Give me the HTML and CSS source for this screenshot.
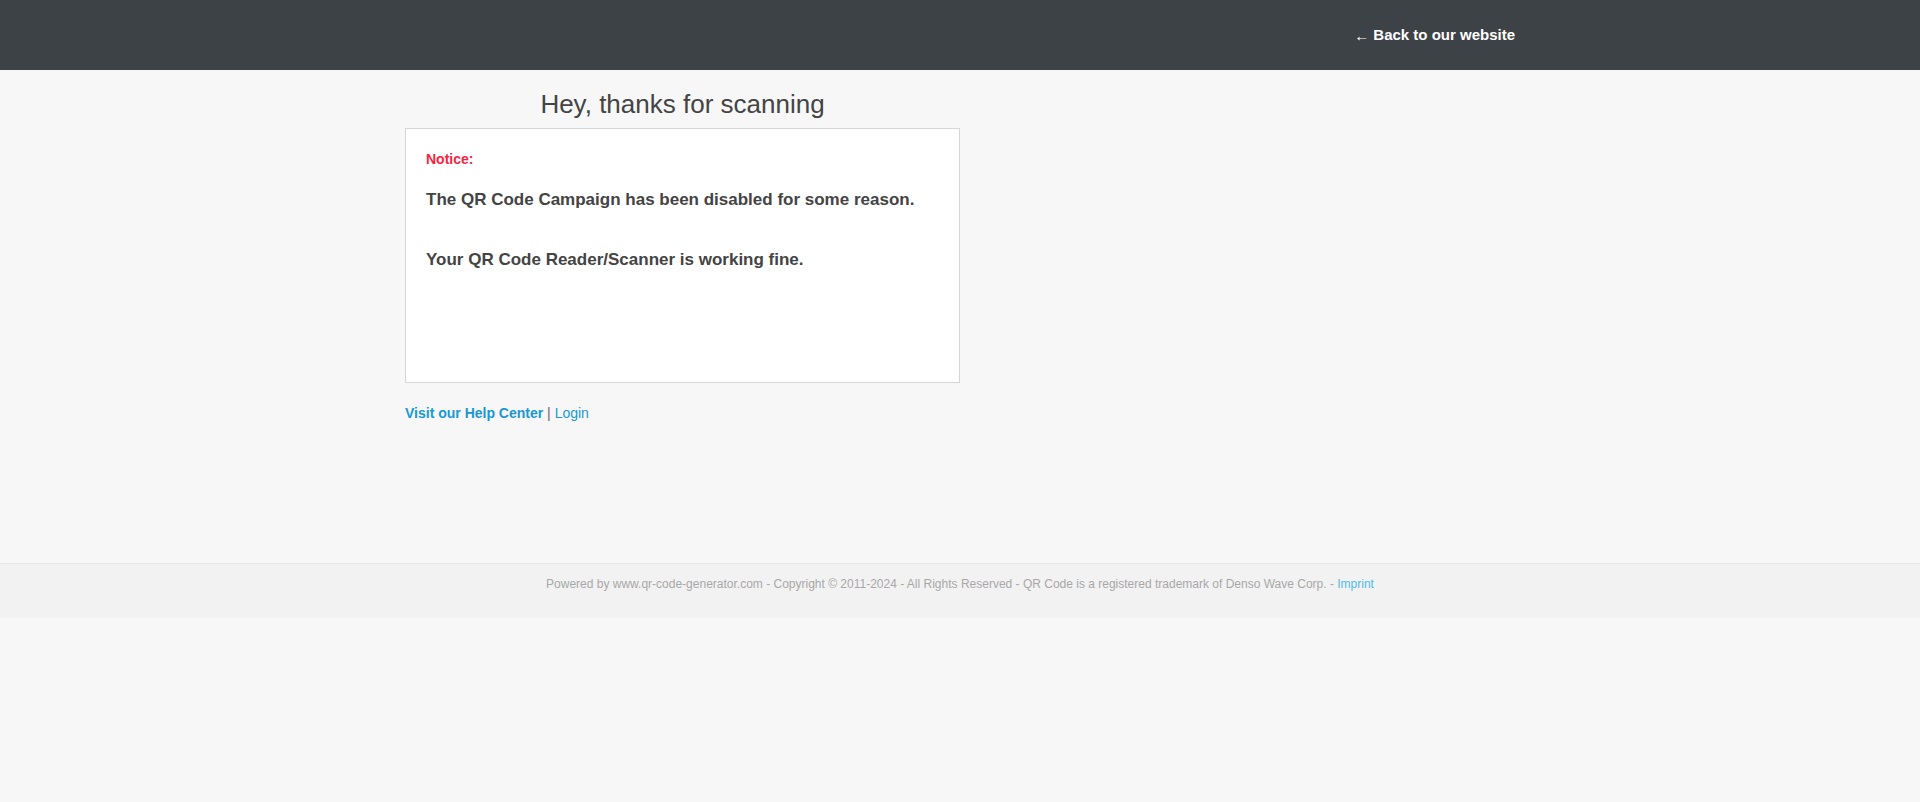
FILE: index.html
```html
<!DOCTYPE html>
<html lang="en">
<head>
<meta charset="utf-8">
<title>Hey, thanks for scanning</title>
<link rel="stylesheet" href="styles.css">
</head>
<body>
<header class="topbar">
  <div class="container topbar-inner">
    <a class="back-link" href="#"><span class="arrow">&larr;</span> Back to our website</a>
  </div>
</header>
<main class="container main">
  <div class="column">
    <h1 class="title">Hey, thanks for scanning</h1>
    <div class="card">
      <p class="notice">Notice:</p>
      <p class="message first">The QR Code Campaign has been disabled for some reason.</p>
      <p class="message">Your QR Code Reader/Scanner is working fine.</p>
    </div>
    <p class="links"><a class="help" href="#">Visit our Help Center</a> <span class="sep">|</span> <a class="login" href="#">Login</a></p>
  </div>
</main>
<footer class="footer">
  <p class="footer-text">Powered by www.qr-code-generator.com - Copyright © 2011-2024 - All Rights Reserved - QR Code is a registered trademark of Denso Wave Corp. - <a class="imprint" href="#">Imprint</a></p>
</footer>
</body>
</html>
```

FILE: styles.css
```css
html, body {
  margin: 0;
  padding: 0;
}
body {
  background: #f7f7f7;
  font-family: "Liberation Sans", Arial, sans-serif;
  color: #444444;
}
a {
  text-decoration: none;
}
.container {
  width: 1110px;
  margin: 0 auto;
}
.topbar {
  background: #3d4246;
  height: 70px;
}
.topbar-inner {
  display: flex;
  justify-content: flex-end;
  align-items: flex-start;
  padding-top: 25px;
  box-sizing: border-box;
}
.back-link {
  color: #ffffff;
  font-weight: bold;
  font-size: 15px;
  line-height: 20px;
}
.back-link .arrow {
  font-weight: normal;
  font-size: 15px;
  vertical-align: -1px;
}
.main {
  padding-top: 19px;
}
.column {
  width: 555px;
}
.title {
  margin: 0 0 9px;
  font-size: 26px;
  line-height: 30px;
  font-weight: normal;
  text-align: center;
  color: #444444;
}
.card {
  background: #ffffff;
  border: 1px solid #d6d6d6;
  box-sizing: border-box;
  min-height: 255px;
  padding: 20px;
}
.notice {
  margin: 0;
  color: #f91f3f;
  font-weight: bold;
  font-size: 14px;
  line-height: 20px;
}
.message {
  margin: 0;
  font-weight: bold;
  font-size: 17px;
  line-height: 24px;
  color: #444444;
}
.message.first {
  margin-top: 19px;
  margin-bottom: 36px;
}
.links {
  margin: 20px 0 0;
  font-size: 14px;
  line-height: 20px;
}
.help {
  color: #1a98d5;
  font-weight: bold;
}
.login {
  color: #1a98d5;
}
.sep {
  color: #666666;
}
.footer {
  margin-top: 140px;
  background: #f2f2f2;
  border-top: 1px solid #e6e6e6;
  padding: 12px 0 25px;
}
.footer-text {
  margin: 0;
  text-align: center;
  font-size: 12px;
  line-height: 17px;
  color: #a8a8a8;
}
.imprint {
  color: #4cbcea;
}
```
